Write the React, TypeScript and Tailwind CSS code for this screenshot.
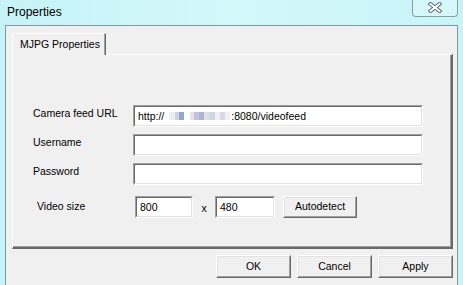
const font = { fontFamily: '"Liberation Sans", Arial, sans-serif' };

function Field({ width, children }: { width: string; children?: React.ReactNode }) {
  return (
    <div className={`${width} h-[22px] border border-t-[#a0a0a0] border-l-[#a0a0a0] border-r-white border-b-white`}>
      <div className="h-full border border-t-[#696969] border-l-[#696969] border-r-[#e3e3e3] border-b-[#e3e3e3] bg-white flex items-center pl-[3px] text-[10.5px] leading-[13px] text-black whitespace-nowrap overflow-hidden">
        {children}
      </div>
    </div>
  );
}

function Button({ width, height, children }: { width: string; height: string; children: React.ReactNode }) {
  return (
    <div className={`${width} ${height} border border-t-white border-l-white border-r-[#696969] border-b-[#696969]`}>
      <div className="h-full border border-t-[#e3e3e3] border-l-[#e3e3e3] border-r-[#a0a0a0] border-b-[#a0a0a0] bg-[#f0f0f0] flex items-center justify-center text-[10.5px] leading-[13px] text-black pb-[1px]">
        {children}
      </div>
    </div>
  );
}

function Blur() {
  // pixelated redaction of the host address
  return (
    <span className="inline-flex items-center h-[10px] w-[61px] ml-[5px] mr-[1px]">
      <span className="w-[6px] h-[8px] bg-[#e6eef4]" />
      <span className="w-[4px] h-[8px] bg-[#c9d6e2]" />
      <span className="w-[5px] h-[8px] bg-[#8fa8d2]" />
      <span className="w-[6px] h-[8px] bg-white" />
      <span className="w-[4px] h-[8px] bg-[#dfe6ee]" />
      <span className="w-[5px] h-[8px] bg-[#c7bfdc]" />
      <span className="w-[5px] h-[8px] bg-[#a9b6d8]" />
      <span className="w-[5px] h-[8px] bg-[#e3dfe9]" />
      <span className="w-[6px] h-[8px] bg-[#cdd8e4]" />
      <span className="w-[5px] h-[8px] bg-[#eef0f3]" />
      <span className="w-[5px] h-[8px] bg-[#d9d9e4]" />
      <span className="w-[5px] h-[8px] bg-[#f2f2f5]" />
    </span>
  );
}

export default function App() {
  return (
    <div
      style={font}
      className="w-[463px] h-[285px] overflow-hidden flex flex-col px-[5px] bg-gradient-to-r from-[#c6f3f7] via-[#d2f8fa] to-[#c8f4f8]"
    >
      {/* Title bar */}
      <div className="h-[25px] flex items-start shrink-0">
        <div className="pl-[2px] pt-[5px] text-[12px] leading-[14px] text-black">Properties</div>
        <div className="ml-auto w-[46px] h-[17px] border border-t-0 border-[#8a9fa4] rounded-b-[4px] bg-[#d6f7f9] flex items-center justify-center pb-[1px]">
          <svg width="14" height="11" viewBox="0 0 14 11">
            <path d="M2.5 2 L11.5 9 M11.5 2 L2.5 9" stroke="#5a6a70" strokeWidth="4" strokeLinecap="square" />
            <path d="M2.5 2 L11.5 9 M11.5 2 L2.5 9" stroke="#ffffff" strokeWidth="2" strokeLinecap="square" />
          </svg>
        </div>
      </div>

      {/* Client area */}
      <div className="flex-1 border-l border-t border-r border-[#7d9ca1] bg-[#f0f0f0] flex flex-col pt-[7px] pl-[6px] pr-[4px]">
        {/* Tab strip */}
        <div className="flex">
          <div className="relative z-10 -mb-px w-[94px] h-[22px] bg-[#f0f0f0] border-t border-l border-white border-r border-r-[#696969] shadow-[inset_-1px_0_0_#a0a0a0] pl-[7px] pt-[4px] text-[10.5px] leading-[13px] text-black">
            MJPG Properties
          </div>
        </div>

        {/* Tab panel */}
        <div className="w-[441px] h-[195px] border-t border-l border-white border-r-2 border-b-2 border-r-[#696969] border-b-[#696969] shadow-[inset_-1px_-1px_0_#a0a0a0] pt-[50px] pl-[20px] text-[10.5px] leading-[13px] text-black">
          <div className="flex h-[22px]">
            <div className="w-[100px] pt-[2px]">Camera feed URL</div>
            <Field width="w-[290px]">
              http://<Blur />:8080/videofeed
            </Field>
          </div>
          <div className="flex h-[22px] mt-[7px]">
            <div className="w-[100px] pt-[2px]">Username</div>
            <Field width="w-[290px]" />
          </div>
          <div className="flex h-[22px] mt-[7px]">
            <div className="w-[100px] pt-[2px]">Password</div>
            <Field width="w-[290px]" />
          </div>
          <div className="flex h-[22px] mt-[11px] items-center">
            <div className="w-[98px] ml-[4px] pb-[1px]">Video size</div>
            <Field width="w-[58px]">800</Field>
            <div className="w-[22px] text-center pt-[3px]">x</div>
            <Field width="w-[60px]">480</Field>
            <div className="ml-[8px]">
              <Button width="w-[74px]" height="h-[22px]">Autodetect</Button>
            </div>
          </div>
        </div>

        {/* Dialog buttons */}
        <div className="flex justify-end gap-[6px] mt-[6px]">
          <Button width="w-[75px]" height="h-[23px]">OK</Button>
          <Button width="w-[75px]" height="h-[23px]">Cancel</Button>
          <Button width="w-[75px]" height="h-[23px]">Apply</Button>
        </div>
      </div>
    </div>
  );
}
